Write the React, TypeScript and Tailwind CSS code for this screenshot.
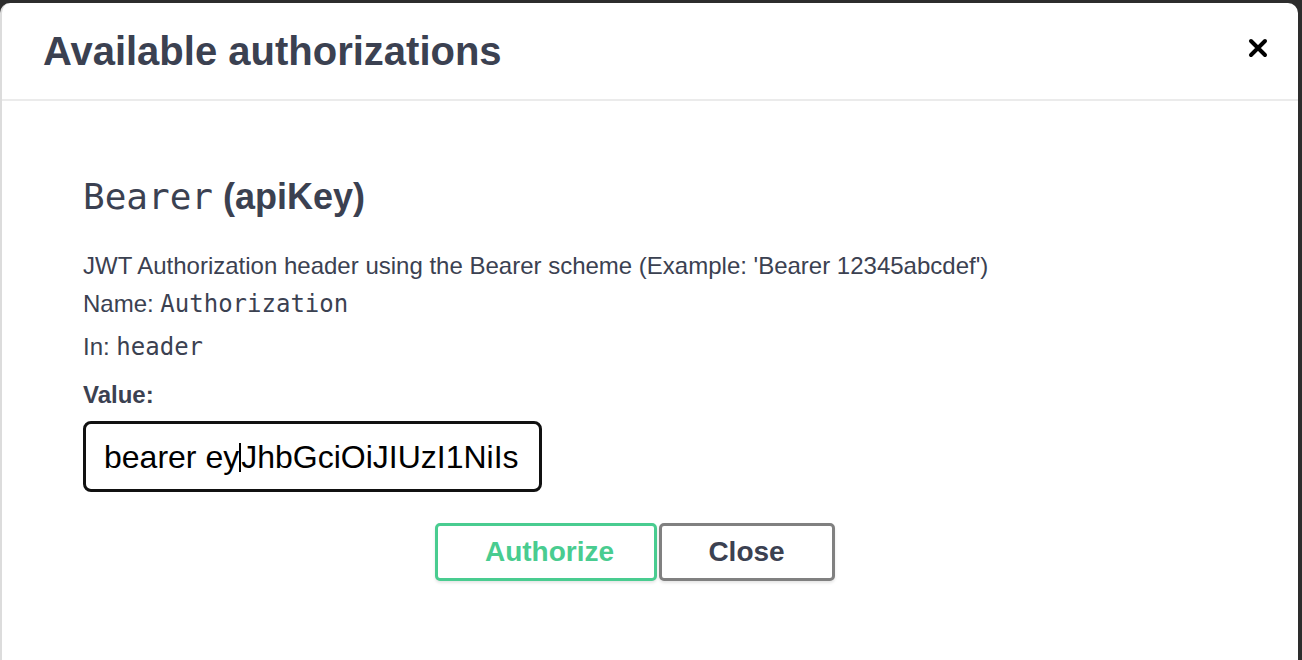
export default function App() {
  return (
    <div className="h-[660px] w-[1302px] overflow-hidden bg-[#2d2d2d] pt-[3px] pr-[4px] font-['Liberation_Sans',Arial,sans-serif] text-[#3b4151]">
      {/* Modal */}
      <div className="h-[680px] rounded-t-[10px] border-l-2 border-[#dcdcdc] bg-white">
        {/* Header */}
        <div className="flex h-[98px] items-center justify-between border-b-2 border-[#ebebeb] pl-[41px] pr-[30px]">
          <h3 className="text-[40px] font-bold leading-none">Available authorizations</h3>
          <button className="mb-[6px] flex h-[20px] w-[20px] items-center justify-center">
            <svg width="20" height="20" viewBox="0 0 20 20">
              <path d="M3 3L17 17M17 3L3 17" stroke="#000" strokeWidth="4" strokeLinecap="round" />
            </svg>
          </button>
        </div>

        {/* Body */}
        <div className="pl-[81px] pr-[112px]">
          <h4 className="mt-[74px] text-[36px] leading-[43px]">
            <code className="font-['DejaVu_Sans_Mono',monospace] text-[36px]">Bearer</code>
            <span className="font-bold">&nbsp;(apiKey)</span>
          </h4>

          <p className="mt-[29px] text-[24px] leading-[38px]">
            JWT Authorization header using the Bearer scheme (Example: 'Bearer 12345abcdef')
          </p>
          <p className="text-[24px] leading-[38px]">
            Name:{" "}
            <code className="font-['DejaVu_Sans_Mono',monospace] text-[24px]">Authorization</code>
          </p>
          <p className="mt-[5px] text-[24px] leading-[38px]">
            In: <code className="font-['DejaVu_Sans_Mono',monospace] text-[24px]">header</code>
          </p>

          <label className="mt-[10px] block text-[24px] font-bold leading-[38px]">Value:</label>
          <div className="mt-[7px] flex h-[71px] w-[459px] items-center overflow-hidden whitespace-nowrap rounded-[8px] border-[3px] border-[#111] pl-[18px] pr-[16px] text-[32px] text-black">
            <div className="overflow-hidden">
              <span>bearer ey</span>
              <span className="inline-block h-[29px] w-[2px] translate-y-[4px] bg-black align-baseline" />
              <span>JhbGciOiJIUzI1NiIs</span>
            </div>
          </div>

          {/* Buttons */}
          <div className="mt-[31px] flex justify-center gap-[2px]">
            <button className="h-[58px] w-[222px] rounded-[5px] border-[3px] border-[#49cc90] bg-white pl-[8px] text-[28px] font-bold text-[#49cc90] shadow-[0_2px_3px_rgba(0,0,0,0.1)]">
              Authorize
            </button>
            <button className="h-[58px] w-[176px] rounded-[5px] border-[3px] border-[#808080] bg-white text-[28px] font-bold text-[#3b4151] shadow-[0_2px_3px_rgba(0,0,0,0.1)]">
              Close
            </button>
          </div>
        </div>
      </div>
    </div>
  );
}
